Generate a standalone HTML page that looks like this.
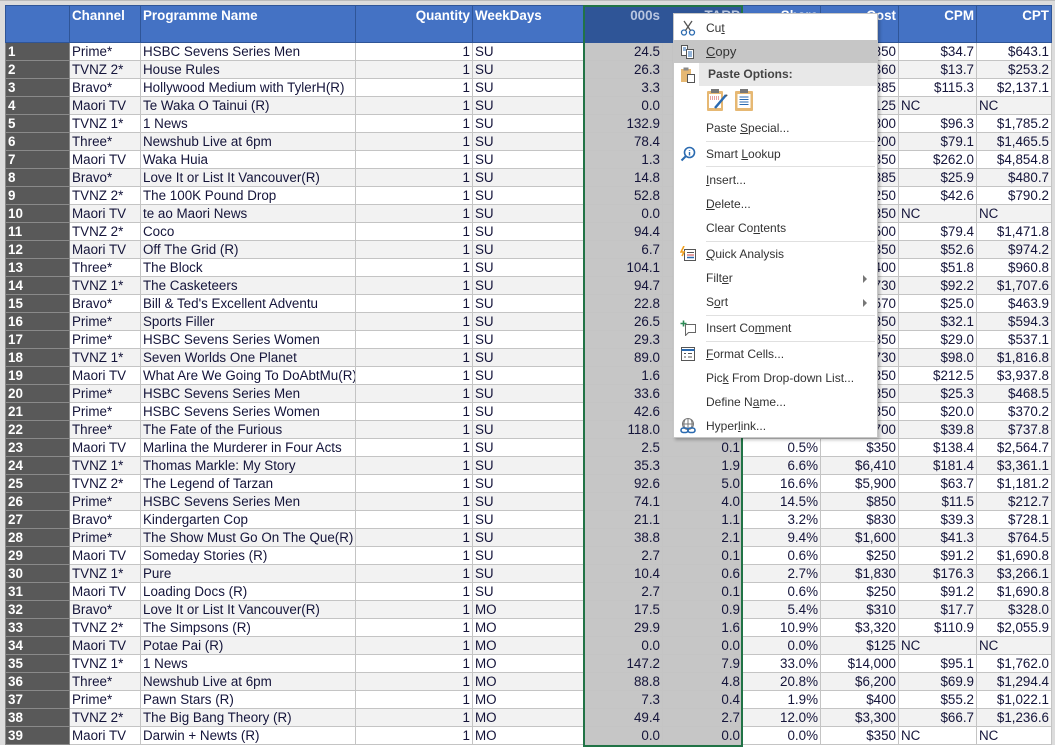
<!DOCTYPE html>
<html><head><meta charset="utf-8"><style>
*{margin:0;padding:0;box-sizing:border-box}
body{width:1055px;height:745px;overflow:hidden;background:#fff;font-family:"Liberation Sans",Arial,sans-serif;position:relative}
#frame{position:absolute;left:0;top:0;width:1055px;height:745px;background:#dcdcdc;border-top:1px solid #bbb}
table{position:absolute;left:5px;top:5px;border-collapse:collapse;table-layout:fixed;width:1046px;font-size:13.4px;color:#14143a}
td{height:18px;border:1px solid #c4c4c4;padding:0 2px 0 2px;white-space:nowrap;overflow:hidden;line-height:16px;text-align:right;vertical-align:bottom}
tr:nth-child(odd) td{background:#f2f2f2}
tr:nth-child(even) td{background:#fff}
tr td:nth-child(1){background:#595959 !important;color:#fff;font-weight:bold;text-align:left;border-color:#8a8a8a}
tr td:nth-child(2),tr td:nth-child(3),tr td:nth-child(5){text-align:left}
tr td:nth-child(6),tr td:nth-child(7){background:#c6c6c6 !important}
tr.h td{height:37px;background:#4472c4 !important;color:#fff;font-weight:bold;vertical-align:top;padding-top:2px;border-color:#2f5597}
tr.h td:nth-child(6),tr.h td:nth-child(7){background:#2f5597 !important;color:#b8c6e0}
.nc{text-align:left !important}
#sel{position:absolute;left:583px;top:5px;width:160px;height:742px;border:2px solid #217346}
#menu{position:absolute;left:673px;top:13px;width:205px;height:425px;background:#fff;border:1px solid #c6c6c6;box-shadow:2px 2px 3px rgba(0,0,0,.25);font-size:12px;color:#333}
.it{position:absolute;left:0;width:203px;height:24px;line-height:24px;padding-left:32px}
.sep{position:absolute;left:32px;right:2px;height:1px;background:#e0e0e0}
.ic{position:absolute;left:6px;top:4px;width:16px;height:16px}
.arr{position:absolute;right:10px;top:9px;border-left:4px solid #777;border-top:4px solid transparent;border-bottom:4px solid transparent}
</style></head><body>
<div id="frame"></div>
<table>
<colgroup><col style="width:64px"><col style="width:71px"><col style="width:215px"><col style="width:117px"><col style="width:112px"><col style="width:78px"><col style="width:80px"><col style="width:78px"><col style="width:78px"><col style="width:78px"><col style="width:75px"></colgroup>
<tr class="h"><td></td><td>Channel</td><td>Programme Name</td><td>Quantity</td><td style="text-align:left">WeekDays</td><td>000s</td><td>TARP</td><td>Share</td><td>Cost</td><td>CPM</td><td>CPT</td></tr>
<tr><td>1</td><td>Prime*</td><td>HSBC Sevens Series Men</td><td>1</td><td>SU</td><td>24.5</td><td>1.3</td><td>4.8%</td><td>$850</td><td>$34.7</td><td>$643.1</td></tr>
<tr><td>2</td><td>TVNZ 2*</td><td>House Rules</td><td>1</td><td>SU</td><td>26.3</td><td>1.4</td><td>5.1%</td><td>$360</td><td>$13.7</td><td>$253.2</td></tr>
<tr><td>3</td><td>Bravo*</td><td>Hollywood Medium with TylerH(R)</td><td>1</td><td>SU</td><td>3.3</td><td>0.2</td><td>0.6%</td><td>$385</td><td>$115.3</td><td>$2,137.1</td></tr>
<tr><td>4</td><td>Maori TV</td><td>Te Waka O Tainui (R)</td><td>1</td><td>SU</td><td>0.0</td><td>0.0</td><td>0.0%</td><td>$125</td><td class="nc">NC</td><td class="nc">NC</td></tr>
<tr><td>5</td><td>TVNZ 1*</td><td>1 News</td><td>1</td><td>SU</td><td>132.9</td><td>7.2</td><td>26.0%</td><td>$12,800</td><td>$96.3</td><td>$1,785.2</td></tr>
<tr><td>6</td><td>Three*</td><td>Newshub Live at 6pm</td><td>1</td><td>SU</td><td>78.4</td><td>4.2</td><td>15.3%</td><td>$6,200</td><td>$79.1</td><td>$1,465.5</td></tr>
<tr><td>7</td><td>Maori TV</td><td>Waka Huia</td><td>1</td><td>SU</td><td>1.3</td><td>0.1</td><td>0.3%</td><td>$350</td><td>$262.0</td><td>$4,854.8</td></tr>
<tr><td>8</td><td>Bravo*</td><td>Love It or List It Vancouver(R)</td><td>1</td><td>SU</td><td>14.8</td><td>0.8</td><td>2.9%</td><td>$385</td><td>$25.9</td><td>$480.7</td></tr>
<tr><td>9</td><td>TVNZ 2*</td><td>The 100K Pound Drop</td><td>1</td><td>SU</td><td>52.8</td><td>2.8</td><td>10.3%</td><td>$2,250</td><td>$42.6</td><td>$790.2</td></tr>
<tr><td>10</td><td>Maori TV</td><td>te ao Maori News</td><td>1</td><td>SU</td><td>0.0</td><td>0.0</td><td>0.0%</td><td>$350</td><td class="nc">NC</td><td class="nc">NC</td></tr>
<tr><td>11</td><td>TVNZ 2*</td><td>Coco</td><td>1</td><td>SU</td><td>94.4</td><td>5.1</td><td>18.4%</td><td>$7,500</td><td>$79.4</td><td>$1,471.8</td></tr>
<tr><td>12</td><td>Maori TV</td><td>Off The Grid (R)</td><td>1</td><td>SU</td><td>6.7</td><td>0.4</td><td>1.3%</td><td>$350</td><td>$52.6</td><td>$974.2</td></tr>
<tr><td>13</td><td>Three*</td><td>The Block</td><td>1</td><td>SU</td><td>104.1</td><td>5.6</td><td>20.3%</td><td>$5,400</td><td>$51.8</td><td>$960.8</td></tr>
<tr><td>14</td><td>TVNZ 1*</td><td>The Casketeers</td><td>1</td><td>SU</td><td>94.7</td><td>5.1</td><td>18.5%</td><td>$8,730</td><td>$92.2</td><td>$1,707.6</td></tr>
<tr><td>15</td><td>Bravo*</td><td>Bill &amp; Ted's Excellent Adventu</td><td>1</td><td>SU</td><td>22.8</td><td>1.2</td><td>4.4%</td><td>$570</td><td>$25.0</td><td>$463.9</td></tr>
<tr><td>16</td><td>Prime*</td><td>Sports Filler</td><td>1</td><td>SU</td><td>26.5</td><td>1.4</td><td>5.2%</td><td>$850</td><td>$32.1</td><td>$594.3</td></tr>
<tr><td>17</td><td>Prime*</td><td>HSBC Sevens Series Women</td><td>1</td><td>SU</td><td>29.3</td><td>1.6</td><td>5.7%</td><td>$850</td><td>$29.0</td><td>$537.1</td></tr>
<tr><td>18</td><td>TVNZ 1*</td><td>Seven Worlds One Planet</td><td>1</td><td>SU</td><td>89.0</td><td>4.8</td><td>17.4%</td><td>$8,730</td><td>$98.0</td><td>$1,816.8</td></tr>
<tr><td>19</td><td>Maori TV</td><td>What Are We Going To DoAbtMu(R)</td><td>1</td><td>SU</td><td>1.6</td><td>0.1</td><td>0.3%</td><td>$350</td><td>$212.5</td><td>$3,937.8</td></tr>
<tr><td>20</td><td>Prime*</td><td>HSBC Sevens Series Men</td><td>1</td><td>SU</td><td>33.6</td><td>1.8</td><td>6.6%</td><td>$850</td><td>$25.3</td><td>$468.5</td></tr>
<tr><td>21</td><td>Prime*</td><td>HSBC Sevens Series Women</td><td>1</td><td>SU</td><td>42.6</td><td>2.3</td><td>8.3%</td><td>$850</td><td>$20.0</td><td>$370.2</td></tr>
<tr><td>22</td><td>Three*</td><td>The Fate of the Furious</td><td>1</td><td>SU</td><td>118.0</td><td>6.4</td><td>23.0%</td><td>$4,700</td><td>$39.8</td><td>$737.8</td></tr>
<tr><td>23</td><td>Maori TV</td><td>Marlina the Murderer in Four Acts</td><td>1</td><td>SU</td><td>2.5</td><td>0.1</td><td>0.5%</td><td>$350</td><td>$138.4</td><td>$2,564.7</td></tr>
<tr><td>24</td><td>TVNZ 1*</td><td>Thomas Markle: My Story</td><td>1</td><td>SU</td><td>35.3</td><td>1.9</td><td>6.6%</td><td>$6,410</td><td>$181.4</td><td>$3,361.1</td></tr>
<tr><td>25</td><td>TVNZ 2*</td><td>The Legend of Tarzan</td><td>1</td><td>SU</td><td>92.6</td><td>5.0</td><td>16.6%</td><td>$5,900</td><td>$63.7</td><td>$1,181.2</td></tr>
<tr><td>26</td><td>Prime*</td><td>HSBC Sevens Series Men</td><td>1</td><td>SU</td><td>74.1</td><td>4.0</td><td>14.5%</td><td>$850</td><td>$11.5</td><td>$212.7</td></tr>
<tr><td>27</td><td>Bravo*</td><td>Kindergarten Cop</td><td>1</td><td>SU</td><td>21.1</td><td>1.1</td><td>3.2%</td><td>$830</td><td>$39.3</td><td>$728.1</td></tr>
<tr><td>28</td><td>Prime*</td><td>The Show Must Go On The Que(R)</td><td>1</td><td>SU</td><td>38.8</td><td>2.1</td><td>9.4%</td><td>$1,600</td><td>$41.3</td><td>$764.5</td></tr>
<tr><td>29</td><td>Maori TV</td><td>Someday Stories (R)</td><td>1</td><td>SU</td><td>2.7</td><td>0.1</td><td>0.6%</td><td>$250</td><td>$91.2</td><td>$1,690.8</td></tr>
<tr><td>30</td><td>TVNZ 1*</td><td>Pure</td><td>1</td><td>SU</td><td>10.4</td><td>0.6</td><td>2.7%</td><td>$1,830</td><td>$176.3</td><td>$3,266.1</td></tr>
<tr><td>31</td><td>Maori TV</td><td>Loading Docs (R)</td><td>1</td><td>SU</td><td>2.7</td><td>0.1</td><td>0.6%</td><td>$250</td><td>$91.2</td><td>$1,690.8</td></tr>
<tr><td>32</td><td>Bravo*</td><td>Love It or List It Vancouver(R)</td><td>1</td><td>MO</td><td>17.5</td><td>0.9</td><td>5.4%</td><td>$310</td><td>$17.7</td><td>$328.0</td></tr>
<tr><td>33</td><td>TVNZ 2*</td><td>The Simpsons (R)</td><td>1</td><td>MO</td><td>29.9</td><td>1.6</td><td>10.9%</td><td>$3,320</td><td>$110.9</td><td>$2,055.9</td></tr>
<tr><td>34</td><td>Maori TV</td><td>Potae Pai (R)</td><td>1</td><td>MO</td><td>0.0</td><td>0.0</td><td>0.0%</td><td>$125</td><td class="nc">NC</td><td class="nc">NC</td></tr>
<tr><td>35</td><td>TVNZ 1*</td><td>1 News</td><td>1</td><td>MO</td><td>147.2</td><td>7.9</td><td>33.0%</td><td>$14,000</td><td>$95.1</td><td>$1,762.0</td></tr>
<tr><td>36</td><td>Three*</td><td>Newshub Live at 6pm</td><td>1</td><td>MO</td><td>88.8</td><td>4.8</td><td>20.8%</td><td>$6,200</td><td>$69.9</td><td>$1,294.4</td></tr>
<tr><td>37</td><td>Prime*</td><td>Pawn Stars (R)</td><td>1</td><td>MO</td><td>7.3</td><td>0.4</td><td>1.9%</td><td>$400</td><td>$55.2</td><td>$1,022.1</td></tr>
<tr><td>38</td><td>TVNZ 2*</td><td>The Big Bang Theory (R)</td><td>1</td><td>MO</td><td>49.4</td><td>2.7</td><td>12.0%</td><td>$3,300</td><td>$66.7</td><td>$1,236.6</td></tr>
<tr><td>39</td><td>Maori TV</td><td>Darwin + Newts (R)</td><td>1</td><td>MO</td><td>0.0</td><td>0.0</td><td>0.0%</td><td>$350</td><td class="nc">NC</td><td class="nc">NC</td></tr>
</table>
<div id="sel"></div>
<div id="menu">
<div class="it" style="top:2px"><svg class="ic" viewBox="0 0 16 16"><circle cx="4" cy="12.5" r="2.5" fill="none" stroke="#2a6ab0" stroke-width="1.3"/><circle cx="12" cy="12.5" r="2.5" fill="none" stroke="#2a6ab0" stroke-width="1.3"/><path d="M5.5 10.5L12 1M10.5 10.5L4 1" stroke="#555" stroke-width="1.3"/></svg>Cu<u>t</u></div>
<div class="it" style="top:26px;background:#c6c6c6;height:23px;line-height:23px;font-size:13px"><svg class="ic" viewBox="0 0 16 16"><path d="M1.5 1.5h6v10h-6z" fill="#fff" stroke="#555"/><path d="M6.5 5.5h7v9h-7z" fill="#fff" stroke="#555"/><path d="M8 8h4M8 10h4M8 12h4M3 4h3M3 6h3" stroke="#2a6ab0"/></svg><u>C</u>opy</div>
<div style="position:absolute;left:25px;top:49px;width:178px;height:23px;background:#e8e8e8;line-height:23px;padding-left:9px;font-weight:bold;color:#444">Paste Options:</div>
<svg style="position:absolute;left:6px;top:53px" width="16" height="16" viewBox="0 0 16 16"><rect x="1" y="2" width="10" height="13" fill="#e6b873"/><rect x="3.5" y="0.5" width="5" height="3" fill="#888"/><path d="M7.5 7.5h7v8h-7z" fill="#fff" stroke="#555"/></svg>
<svg style="position:absolute;left:32px;top:74px" width="22" height="24" viewBox="0 0 22 24"><rect x="1" y="3" width="16" height="20" rx="1" fill="#e6b873"/><rect x="3" y="6" width="12" height="14" fill="#fff"/><rect x="5" y="1" width="8" height="4" fill="#777"/><path d="M4 9h10M4 11h10" stroke="#d04040" stroke-dasharray="1 1"/><path d="M20 7L9 20" stroke="#2a6ab0" stroke-width="2.5"/><path d="M20 7l1 1" stroke="#555" stroke-width="2"/></svg>
<svg style="position:absolute;left:60px;top:74px" width="20" height="24" viewBox="0 0 20 24"><rect x="1" y="3" width="18" height="20" rx="1" fill="#e6b873"/><rect x="3.5" y="6" width="13" height="14" fill="#fff"/><rect x="6" y="1" width="8" height="4" fill="#777"/><path d="M5.5 9h9M5.5 11.5h9M5.5 14h9M5.5 16.5h9" stroke="#2a6ab0"/></svg>
<div class="it" style="top:102px">Paste <u>S</u>pecial...</div>
<div class="sep" style="top:127px"></div>
<div class="it" style="top:128px"><svg class="ic" viewBox="0 0 16 16"><circle cx="9.5" cy="6.5" r="5" fill="none" stroke="#2a6ab0" stroke-width="1.6"/><path d="M6 10L1.5 14.5" stroke="#2a6ab0" stroke-width="2"/><path d="M9.5 6v3.5M9.5 4v.8" stroke="#2a6ab0" stroke-width="1.4"/></svg>Smart <u>L</u>ookup</div>
<div class="sep" style="top:152px"></div>
<div class="it" style="top:154px"><u>I</u>nsert...</div>
<div class="it" style="top:178px"><u>D</u>elete...</div>
<div class="it" style="top:202px">Clear Co<u>n</u>tents</div>
<div class="sep" style="top:227px"></div>
<div class="it" style="top:228px"><svg class="ic" viewBox="0 0 16 16"><rect x="4.5" y="3.5" width="11" height="11" fill="#fff" stroke="#555"/><path d="M7 6.5h7" stroke="#555"/><path d="M7 9h7" stroke="#d04040"/><path d="M7 11.5h7" stroke="#2a6ab0" stroke-width="1.5"/><path d="M4 0L1 6h3L2 10" stroke="#f0a020" stroke-width="1.6" fill="none"/></svg><u>Q</u>uick Analysis</div>
<div class="it" style="top:252px">Filt<u>e</u>r<span class="arr"></span></div>
<div class="it" style="top:276px">S<u>o</u>rt<span class="arr"></span></div>
<div class="sep" style="top:301px"></div>
<div class="it" style="top:302px"><svg class="ic" viewBox="0 0 16 16"><path d="M5.5 4.5h10v8h-7l-3 3v-3h-0z" fill="none" stroke="#666"/><path d="M3.5 0.5v6M0.5 3.5h6" stroke="#2e8b57" stroke-width="1.6"/></svg>Insert Co<u>m</u>ment</div>
<div class="sep" style="top:327px"></div>
<div class="it" style="top:328px"><svg class="ic" viewBox="0 0 16 16"><rect x="1.5" y="1.5" width="13" height="13" fill="#fff" stroke="#555"/><path d="M1.5 4h13" stroke="#2a6ab0" stroke-width="2"/><path d="M4 7.5h2M4 11h2M8 7.5h4M8 11h4" stroke="#555"/></svg><u>F</u>ormat Cells...</div>
<div class="it" style="top:352px">Pic<u>k</u> From Drop-down List...</div>
<div class="it" style="top:376px">Define N<u>a</u>me...</div>
<div class="it" style="top:400px"><svg class="ic" viewBox="0 0 16 16"><circle cx="8" cy="6" r="5.5" fill="none" stroke="#777"/><path d="M2.5 6h11M8 .5v11M5 1.5c-1.5 3-1.5 6 0 9M11 1.5c1.5 3 1.5 6 0 9" stroke="#777" fill="none"/><rect x="1" y="10" width="7" height="4.5" rx="2.2" fill="none" stroke="#2a6ab0" stroke-width="1.6"/><rect x="8" y="10" width="7" height="4.5" rx="2.2" fill="none" stroke="#2a6ab0" stroke-width="1.6"/></svg>Hyper<u>l</u>ink...</div>
</div>
</body></html>
